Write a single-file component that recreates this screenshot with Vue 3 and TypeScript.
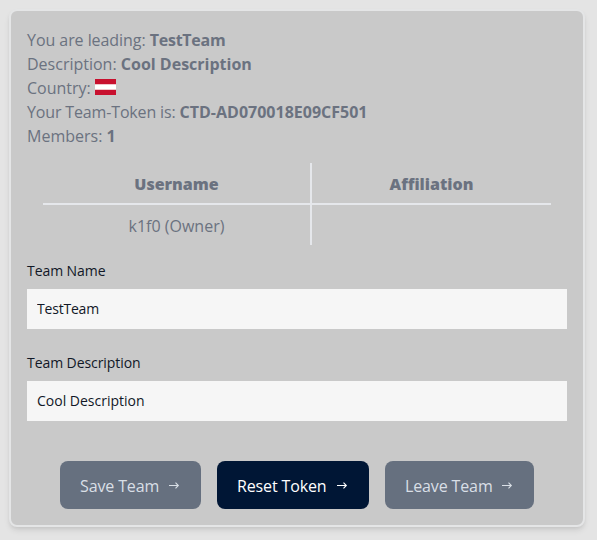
<script setup lang="ts">
import { ref } from 'vue'

const name = ref('TestTeam')
const description = ref('Cool Description')
const members = [{ name: 'k1f0 (Owner)', affiliation: '' }]
const actions = [
  { label: 'Save Team', kind: 'save' },
  { label: 'Reset Token', kind: 'reset' },
  { label: 'Leave Team', kind: 'leave' },
]
</script>

<template>
  <main class="page">
    <section class="card">
      <div class="info">
        <p><span class="lead">You are leading: </span><strong class="team">TestTeam</strong></p>
        <p>Description: <strong>Cool Description</strong></p>
        <p>Country: <svg class="flag" viewBox="0 0 21 16" preserveAspectRatio="none"><path fill="#fff" d="M0 0h21v16H0z" /><path fill="#c8102e" d="M0 0h21v5.33H0zM0 10.67h21V16H0z" /></svg></p>
        <p><span class="token-label">Your Team-Token is: </span><strong>CTD-AD070018E09CF501</strong></p>
        <p>Members: <strong>1</strong></p>
      </div>
      <table class="members">
        <thead>
          <tr><th>Username</th><th>Affiliation</th></tr>
        </thead>
        <tbody>
          <tr v-for="m in members" :key="m.name"><td>{{ m.name }}</td><td>{{ m.affiliation }}</td></tr>
        </tbody>
      </table>
      <form @submit.prevent>
        <label class="field">
          <span>Team Name</span>
          <input v-model="name" class="team-input" type="text" />
        </label>
        <label class="field">
          <span>Team Description</span>
          <input v-model="description" type="text" />
        </label>
        <div class="actions">
          <button v-for="a in actions" :key="a.kind" type="button" :class="['btn', a.kind]">
            {{ a.label }}
            <svg class="arrow" viewBox="0 0 12 12"><path d="M0 5.5h9.3M6.5 2.7l2.8 2.8-2.8 2.8" /></svg>
          </button>
        </div>
      </form>
    </section>
  </main>
</template>

<style>
body {
  background: #e4e4e4;
}
</style>

<style scoped>
* {
  box-sizing: border-box;
}
.page {
  height: 540px;
  padding: 9px 12px 13px 9px;
  font: 16px/24px 'Open Sans', 'Noto Sans', sans-serif;
  color: #6b7280;
}
.card {
  height: 518px;
  padding: 17px 16px;
  border: 2px solid #e4e5e6;
  border-radius: 8px;
  background: #c9c9c9;
  box-shadow: 0 4px 6px -1px rgba(0, 0, 0, 0.1), 0 2px 4px -1px rgba(0, 0, 0, 0.06);
}
p {
  margin: 0;
}
.lead {
  letter-spacing: -0.06px;
}
.team {
  letter-spacing: -0.25px;
}
.token-label {
  letter-spacing: -0.15px;
}
.flag {
  width: 21px;
  height: 16px;
  vertical-align: -1px;
}
.members {
  width: 508px;
  margin: 15px 0 0 16px;
  border-collapse: collapse;
  table-layout: fixed;
  text-align: center;
}
th,
td {
  height: 41px;
  padding: 2px 0 0;
}
th:first-child,
td:first-child {
  width: 268px;
  border-right: 2px solid #e5e7eb;
}
th {
  border-bottom: 2px solid #e5e7eb;
  font-weight: 800;
}
.field {
  display: block;
  font-size: 14px;
  line-height: 20px;
  color: #111827;
}
form {
  padding-top: 16px;
}
.field + .field {
  margin-top: 24px;
}
.field span {
  display: block;
  margin-bottom: 8px;
  letter-spacing: -0.07px;
}
.field input {
  display: block;
  width: 540px;
  height: 40px;
  padding: 0 10px 2px;
  border: 0;
  border-radius: 0;
  background: #f6f6f6;
  color: #111827;
  font: inherit;
}
.field .team-input {
  letter-spacing: -0.2px;
}
.actions {
  display: flex;
  justify-content: center;
  gap: 16px;
  margin-top: 40px;
}
.btn {
  display: flex;
  align-items: center;
  justify-content: space-between;
  height: 48px;
  padding: 2px 20px 0;
  border: 0;
  border-radius: 8px;
  background: #66707f;
  color: #d9dfe6;
  font: inherit;
  letter-spacing: -0.13px;
  white-space: nowrap;
}
.save {
  width: 141px;
}
.reset {
  width: 152px;
  background: #001635;
  color: #fff;
}
.leave {
  width: 149px;
}
.arrow {
  width: 12px;
  height: 12px;
  overflow: visible;
  fill: none;
  stroke: currentColor;
  stroke-width: 1.1;
}
</style>
